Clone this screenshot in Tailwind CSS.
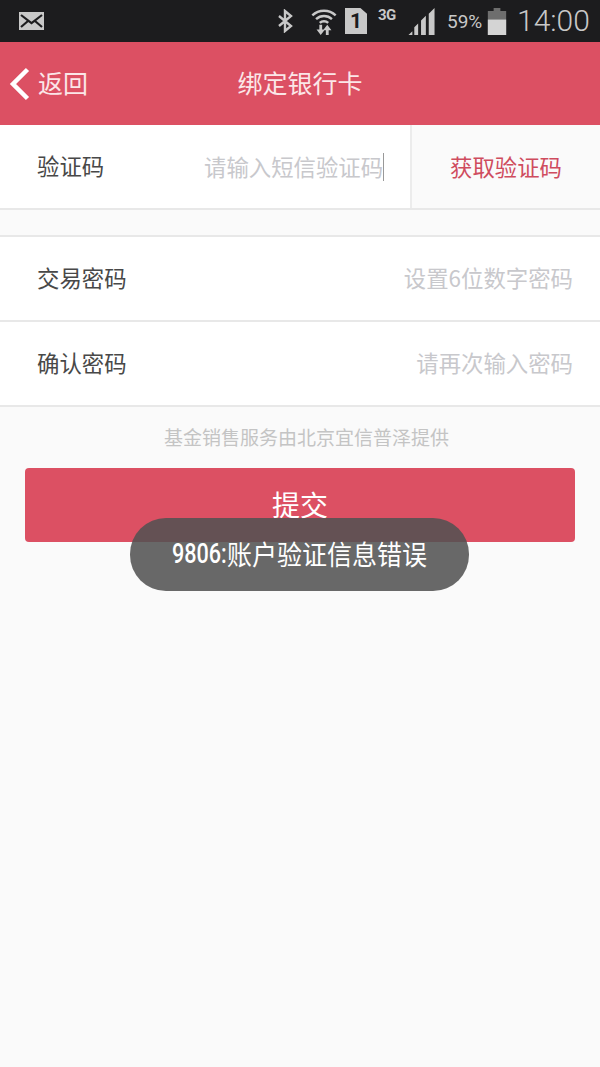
<!DOCTYPE html>
<html lang="zh-CN">
<head>
    <meta charset="UTF-8">
    <meta name="viewport" content="width=device-width, initial-scale=1.0">
    <title>绑定银行卡</title>
    <script src="https://cdn.jsdelivr.net/npm/@tailwindcss/browser@4"></script>
</head>
<body class="relative h-[1067px] w-[600px] overflow-hidden bg-[#fafafa] font-['Noto_Sans_CJK_SC','Noto_Sans',sans-serif]">

    <!-- Status bar -->
    <div class="flex h-[42px] items-center bg-[#1c1c1e] pl-[19px] text-[#c8c8c8]">
        <svg class="h-[18px] w-[25px] shrink-0" viewBox="0 0 25 18">
            <rect width="25" height="18" fill="#c8c8c8"/>
            <path d="M2 3l10.500 8L23 3M2 15l7-6M23 15l-7-6" fill="none" stroke="#1c1c1e" stroke-width="2.200"/>
        </svg>
        <svg class="ml-[233px] h-[24px] w-[17px] shrink-0" viewBox="0 0 17 24">
            <path d="M2 7l12 10-6 5V2l6 5L2 17" fill="none" stroke="#c8c8c8" stroke-width="2.400"/>
        </svg>
        <svg class="ml-[16px] h-[28px] w-[28px] shrink-0" viewBox="0 0 28 30">
            <g fill="none" stroke="#c8c8c8" stroke-width="2.600">
                <path d="M1.500 9a18 18 0 0 1 25 0"/>
                <path d="M5.500 13a12.500 12.500 0 0 1 17 0"/>
                <path d="M9.500 17a6.500 6.500 0 0 1 9 0"/>
            </g>
            <path d="M9 19h3v5h3l-4.500 6L6 24h3zM19 30h-3v-5h-3l4.500-6 4.500 6h-3z" fill="#c8c8c8"/>
        </svg>
        <div class="ml-[7px] flex h-[26px] w-[22px] shrink-0 items-center justify-center bg-[#c8c8c8] [clip-path:polygon(0_0,70%_0,100%_22%,100%_100%,0_100%)]">
            <span class="font-['Roboto'] text-[21px] leading-none font-bold text-[#1c1c1e]">1</span>
        </div>
        <span class="mb-[12px] ml-[11px] w-[22px] shrink-0 font-['Roboto'] text-[15px] leading-none font-bold tracking-[-0.5px]">3G</span>
        <svg class="mt-[1px] ml-[8px] h-[27px] w-[28px] shrink-0" viewBox="0 0 28 28">
            <path d="M0 28l4-4v4zM6 28v-8l4-4v12zM13 28V13l5-5v20zM21 28V6l6-6v28z" fill="#c8c8c8"/>
        </svg>
        <span class="ml-[11px] w-[36px] shrink-0 font-['Roboto'] text-[19px] leading-none">59%</span>
        <svg class="ml-[4px] h-[27px] w-[20px] shrink-0" viewBox="0 0 19 28">
            <path d="M6 0h7v3h6v25H0V3h6z" fill="#6e6e6e"/>
            <rect y="12" width="19" height="16" fill="#d4d4d4"/>
        </svg>
        <span class="ml-[10px] shrink-0 font-['Roboto'] text-[30px] leading-none font-light">14:00</span>
    </div>

    <!-- Header -->
    <div class="relative flex h-[83px] items-center justify-center bg-[#dc5063] pb-[2px]">
        <div class="absolute top-0 left-[9px] flex h-full items-center gap-[8px]">
            <svg class="h-[34px] w-[21px]" viewBox="0 0 21 34">
                <path d="M18.500 2.500L4 17l14.500 14.500" fill="none" stroke="#ffffff" stroke-width="4.500"/>
            </svg>
            <span class="pb-[2px] text-[25px] leading-none text-[#fbe6e8]">返回</span>
        </div>
        <span class="text-[25px] leading-none text-[#fbe6e8]">绑定银行卡</span>
    </div>

    <!-- Verification code -->
    <div class="flex h-[85px] border-b-2 border-[#e8e8e8] bg-white">
        <span class="flex w-[200px] items-center pb-[2px] pl-[37px] text-[22.400px] text-[#484848]">验证码</span>
        <div class="flex w-[212px] items-center border-r-2 border-[#ececec] pl-[4px] text-[22.400px] text-[#c8c8cc]">
            <span>请输入短信验证码</span><span class="h-[28px] w-[1px] bg-[#999999]"></span>
        </div>
        <span class="flex flex-1 items-center justify-center bg-[#fafafa] text-[22.400px] text-[#cf4c5e]">获取验证码</span>
    </div>

    <!-- Password rows -->
    <div class="mt-[25px] border-t-2 border-[#e8e8e8] bg-white">
        <div class="flex h-[85px] items-center justify-between border-b-2 border-[#e8e8e8] pr-[27px] pb-[1px] pl-[37px]">
            <span class="text-[22.400px] text-[#484848]">交易密码</span>
            <span class="text-[22.400px] text-[#c8c8cc]">设置6位数字密码</span>
        </div>
        <div class="flex h-[85px] items-center justify-between border-b-2 border-[#e8e8e8] pr-[27px] pb-[1px] pl-[37px]">
            <span class="text-[22.400px] text-[#484848]">确认密码</span>
            <span class="text-[22.400px] text-[#c8c8cc]">请再次输入密码</span>
        </div>
    </div>

    <p class="mt-[17px] pl-[13px] text-center text-[19px] leading-[26px] text-[#c4c4c4]">基金销售服务由北京宜信普泽提供</p>

    <button class="mx-[25px] mt-[18px] flex h-[74px] w-[550px] items-center justify-center rounded-[4px] bg-[#dc5063] pb-[2px] text-[28px] text-white">提交</button>

    <!-- Toast -->
    <div class="absolute top-[518px] left-[130px] flex h-[73px] w-[339px] items-center justify-center rounded-[36px] bg-[#525252]/87 text-white">
        <span class="inline-block w-[55px] origin-left scale-x-[0.8] font-['Roboto'] text-[27px] font-medium whitespace-nowrap">9806:</span>
        <span class="inline-block w-[200px] origin-left scale-x-[0.926] text-[27px] whitespace-nowrap">账户验证信息错误</span>
    </div>
</body>
</html>
